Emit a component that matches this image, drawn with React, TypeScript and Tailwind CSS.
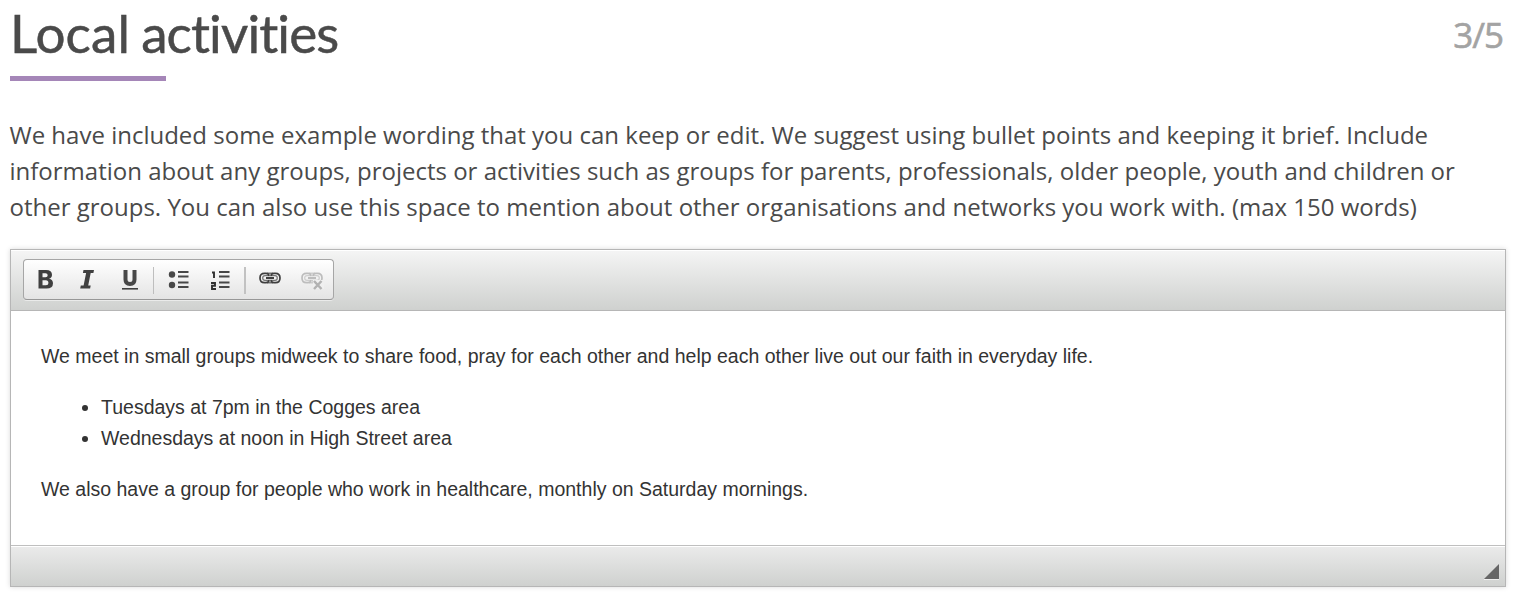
import React from "react";

function BulletListIcon() {
  return (
    <svg width="24" height="24" viewBox="0 0 24 24" fill="#484848">
      <circle cx="5" cy="7.5" r="3.2" />
      <circle cx="5" cy="18" r="3.2" />
      <path d="M11 4h10.500v2H11zM11 8.500h10.500v2H11zM11 14.500h10.500v2H11zM11 19h10.500v2H11z" />
    </svg>
  );
}

function NumberListIcon() {
  return (
    <svg width="24" height="24" viewBox="0 0 24 24" fill="#484848">
      <path d="M11 4h10.500v2H11zM11 8.500h10.500v2H11zM11 14.500h10.500v2H11zM11 19h10.500v2H11z" />
      <path d="M4 5.500h2V11M3 16h4v2.700H4V22h4" fill="none" stroke="#303030" strokeWidth="1.900" />
    </svg>
  );
}

function Chain({ color }: { color: string }) {
  return (
    <g fill="none" stroke={color}>
      <path d="M10 9.200Q10 6.300 7 6.300H5.500Q1 6.300 1 11T5.500 15.700H7Q10 15.700 10 12.800M12 9.200Q12 6.300 15 6.300H16.500Q21 6.300 21 11T16.500 15.700H15Q12 15.700 12 12.800" strokeWidth="1.700" />
      <path d="M9 8.700H6Q3.700 8.700 3.700 11T6 13.300H9M13 8.700H16Q18.300 8.700 18.300 11T16 13.300H13" strokeWidth="1.200" opacity=".7" />
      <path d="M7 11H15" strokeWidth="2" />
      <path d="M8 6.300H14M8 15.700H14" strokeWidth="1.400" opacity=".7" />
    </g>
  );
}

function ToolButton({ label, className, children }: { label: string; className: string; children: React.ReactNode }) {
  return (
    <button aria-label={label} className={`flex h-full shrink-0 items-center justify-center ${className}`}>
      {children}
    </button>
  );
}

function Toolbar() {
  return (
    <div className="flex h-[61px] items-start border-b border-[#b6b6b6] bg-linear-to-b from-[#f5f5f5] to-[#cfd1cf] pt-[9px] pl-3 shadow-[inset_0_1px_0_#fff]">
      <div className="flex h-[41px] w-[311px] items-center rounded-[4px] border border-[#a6a6a6] border-b-[#979797] bg-linear-to-b from-white to-[#e4e4e4] shadow-[0_1px_0_rgba(255,255,255,.5)]">
        <ToolButton label="Bold" className="w-[43px] pr-px pb-0.5">
          <svg width="24" height="24" viewBox="0 0 24 24">
            <path fillRule="evenodd" fill="#404040" d="M5.500 3h7.500q6 0 6 4.700 0 3-3 4 4 .8 4 4.600 0 5.200-6.500 5.200H5.500zM9.500 6.200v4h3q2.200 0 2.200-2t-2.200-2zM9.500 13.200v5h3.400q2.500 0 2.500-2.500t-2.500-2.500z" />
          </svg>
        </ToolButton>
        <ToolButton label="Italic" className="w-[42px] pr-0.5 pb-0.5">
          <svg width="24" height="24" viewBox="0 0 24 24">
            <path fill="#404040" d="M8.500 3h10.500l-.6 3h-2.700L13.200 18.500h2.500l-.6 3H5.200l.6-3h2.800L11.100 6H7.900z" />
          </svg>
        </ToolButton>
        <ToolButton label="Underline" className="w-[43px] pr-0.5 pb-0.5">
          <svg width="24" height="24" viewBox="0 0 24 24">
            <path d="M7.500 3V12.500Q7.500 17 12 17T16.500 12.500V3" fill="none" stroke="#484848" strokeWidth="4" />
            <path d="M4 21.800H20" stroke="#404040" strokeWidth="1.600" />
          </svg>
        </ToolButton>
        <span className="mt-0.5 ml-px h-[27px] w-px shrink-0 bg-[#bebebe]" />
        <ToolButton label="Bulleted list" className="ml-1 w-[42px] pb-0.5"><BulletListIcon /></ToolButton>
        <ToolButton label="Numbered list" className="w-[42px] pr-[3px] pb-0.5"><NumberListIcon /></ToolButton>
        <span className="mt-0.5 ml-[2px] h-[27px] w-[2px] shrink-0 bg-[#c2c2c2]" />
        <ToolButton label="Link" className="ml-1 w-[42px] pr-0.5">
          <svg width="22" height="22" viewBox="0 0 22 22" className="-mt-[3px]"><Chain color="#3f3f3f" /></svg>
        </ToolButton>
        <ToolButton label="Unlink" className="w-[42px] pb-0.5">
          <svg width="24" height="24" viewBox="0 0 24 24">
            <Chain color="#bdbdbd" />
            <path d="M12 13h11v9H12z" fill="#f0f0f0" />
            <path d="M13 14l7.500 8M20.500 14l-7.500 8" stroke="#b2b2b2" strokeWidth="2.500" />
          </svg>
        </ToolButton>
      </div>
    </div>
  );
}

export default function App() {
  return (
    <main className="h-[607px] w-[1529px] overflow-hidden bg-white pl-[10px] text-[#4a4a4a]">
      <header className="flex h-[81px] w-[1494px] justify-between">
        <div>
          <h1 className="h-[76px] whitespace-nowrap font-['Lato',sans-serif] text-[53px] leading-[66px] tracking-[-0.9px] [word-spacing:-2.5px] [-webkit-text-stroke:0.5px_#4a4a4a]">
            <span className="tracking-[0.1px]">Local </span>activities
          </h1>
          <div className="h-[5px] w-[156px] bg-[#a586b8]" />
        </div>
        <div className="pt-[11px] pr-px font-['Open_Sans',sans-serif] text-[35px] leading-[48px] tracking-[-1px] text-[#a3a3a3] [-webkit-text-stroke:0.6px_#a3a3a3]">3/5</div>
      </header>
      <p className="mt-[36px] h-[108px] whitespace-nowrap font-['Open_Sans',sans-serif] text-[24px] leading-[36px] -ml-[0.5px]">
        We have included some example wording that you can keep or edit. We suggest using bullet points and keeping it brief. Include<br />
        information about any groups, projects or activities such as groups for parents, professionals, older people, youth and children or<br />
        other groups. You can also use this space to mention about other organisations and networks you work with. (max 150 words)
      </p>
      <section className="mt-[24px] flex h-[338px] w-[1496px] flex-col border border-[#b6b6b6] shadow-[0_0_5px_rgba(0,0,0,.15)]">
        <Toolbar />
        <div className="min-h-0 flex-1 px-[30px] pt-[30px] font-['Liberation_Sans',Arial,sans-serif] text-[19.5px] leading-[31.2px] text-[#333]">
          <p>We meet in small groups midweek to share food, pray for each other and help each other live out our faith in everyday life.</p>
          <ul className="my-[19.5px] list-disc pl-[60px]">
            <li>Tuesdays at 7pm in the Cogges area</li>
            <li>Wednesdays at noon in High Street area</li>
          </ul>
          <p>We also have a group for people who work in healthcare, monthly on Saturday mornings.</p>
        </div>
        <footer className="flex h-[41px] items-end justify-end border-t border-[#bfbfbf] bg-linear-to-b from-[#ebebeb] to-[#cfd1cf] pr-1.5 pb-[6px] shadow-[inset_0_1px_0_#fff]">
          <svg width="15" height="16" viewBox="0 0 15 16"><path d="M0 15.500H15" stroke="#eee" /><path d="M15 0V15H0z" fill="#666" /></svg>
        </footer>
      </section>
    </main>
  );
}
